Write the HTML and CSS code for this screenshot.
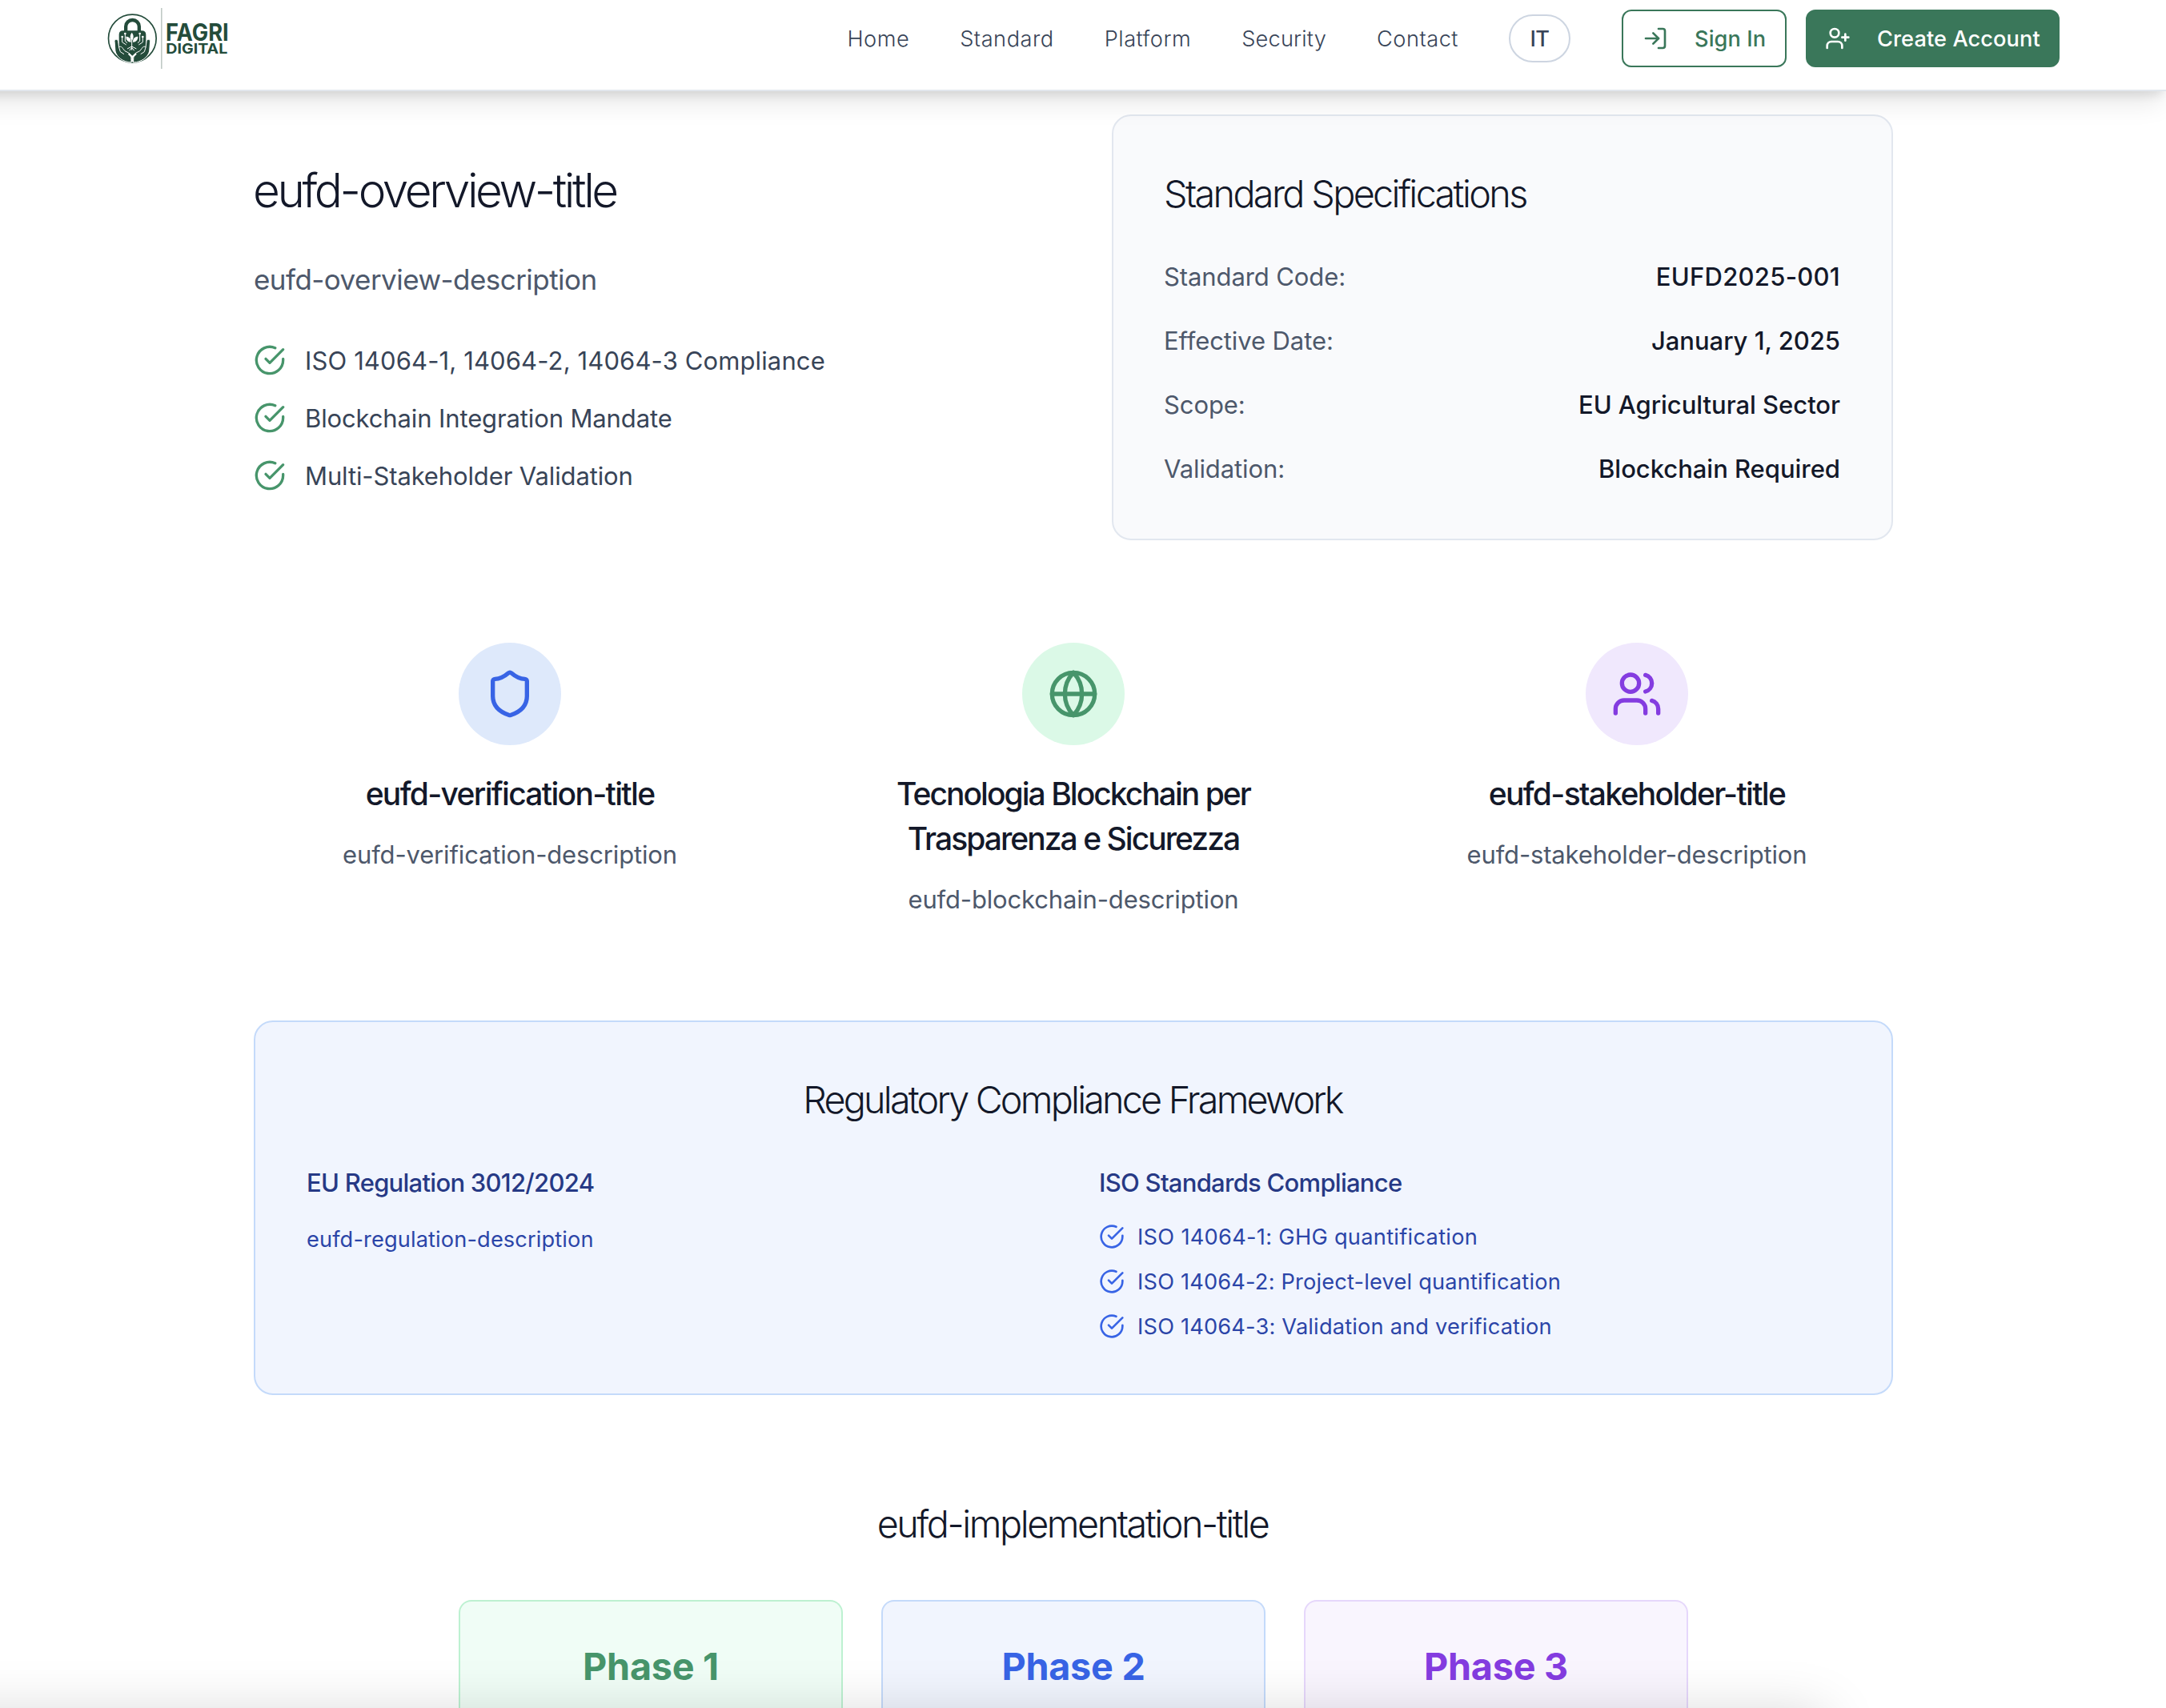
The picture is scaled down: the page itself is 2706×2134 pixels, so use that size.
FILE: index.html
```html
<!DOCTYPE html>
<html lang="en">
<head>
<meta charset="utf-8">
<title>Fagri Digital</title>
<link rel="stylesheet" href="styles.css">
</head>
<body>
<svg class="sprite" aria-hidden="true">
  <symbol id="check" viewBox="0 0 24 24"><path d="M22 11.08V12a10 10 0 1 1-5.93-9.14"/><path d="m9 11 3 3L22 4"/></symbol>
</svg>

<header class="header">
  <svg class="logo" viewBox="90 15 480 255" role="img" aria-label="Fagri Digital">
    <circle class="logo-ring" cx="196" cy="144" r="89.5"/>
    <path class="logo-shackle" d="M171.500 122V99a25 24 0 0 1 50 0v23"/>
    <path class="logo-fill" d="M161 115h70q16 0 16 15v38q-4 20-24 26l-12 14v14h-30v-14l-12-14q-20-6-23-26v-38q0-15 15-15z"/>
    <g class="logo-hand">
      <path d="M129 154c2-8 12-8 14 1l3 23c4-6 11-3 14 3l8 10 14 7c9 6 10 12 10 36-32-2-54-19-60-42z"/>
      <path class="logo-line" d="M146 178l5 16 14 9"/>
    </g>
    <g class="logo-hand" transform="matrix(-1 0 0 1 392 0)">
      <path d="M129 154c2-8 12-8 14 1l3 23c4-6 11-3 14 3l8 10 14 7c9 6 10 12 10 36-32-2-54-19-60-42z"/>
      <path class="logo-line" d="M146 178l5 16 14 9"/>
    </g>
    <g class="logo-leaf">
      <path d="M194 122c8 10 8 20 0 31c-8-11-8-21 0-31z"/>
      <path d="M172 137c12 0 19 6 19 21c-12-1-19-8-19-21z"/>
      <path d="M217 137c-12 0-19 6-19 21c12-1 19-8 19-21z"/>
      <circle cx="158" cy="138" r="4"/><circle cx="169" cy="126" r="4"/><circle cx="235" cy="138" r="4"/><circle cx="224" cy="126" r="4"/>
    </g>
    <path class="logo-line" d="M194 150v38M194 174l-17 9M194 174l17 9M194 178l-9 12M194 178l9 12M158 140v18l15 10M169 128v26l8 7M235 140v18l-15 10M224 128v26l-8 7"/>
    <path class="logo-stem" d="M196 232v-22M196 214l-14-13M196 214l14-13"/>
    <path class="logo-divider" d="M305.500 30V258"/>
    <text class="logo-name" x="321" y="152" textLength="236" lengthAdjust="spacingAndGlyphs">FAGRI</text>
    <text class="logo-sub" x="322" y="200" textLength="231" lengthAdjust="spacingAndGlyphs">DIGITAL</text>
  </svg>

  <nav class="nav">
    <a class="nav-link">Home</a>
    <a class="nav-link">Standard</a>
    <a class="nav-link">Platform</a>
    <a class="nav-link nav-link-tight">Security</a>
    <a class="nav-link">Contact</a>
    <button class="lang">IT</button>
    <div class="actions">
      <a class="btn btn-outline">
        <svg class="icon" viewBox="0 0 24 24"><path d="M15 3h4a2 2 0 0 1 2 2v14a2 2 0 0 1-2 2h-4"/><path d="m10 17 5-5-5-5"/><path d="M15 12H3"/></svg>
        <span>Sign In</span>
      </a>
      <a class="btn btn-solid">
        <svg class="icon" viewBox="0 0 24 24"><path d="M16 21v-2a4 4 0 0 0-4-4H6a4 4 0 0 0-4 4v2"/><circle cx="9" cy="7" r="4"/><path d="M19 8v6M22 11h-6"/></svg>
        <span>Create Account</span>
      </a>
    </div>
  </nav>
</header>

<main class="main">
  <section class="overview">
    <div>
      <h2 class="overview-title">eufd-overview-title</h2>
      <p class="overview-text">eufd-overview-description</p>
      <ul class="checks">
        <li class="check-first"><svg class="icon"><use href="#check"/></svg><span>ISO 14064-1, 14064-2, 14064-3 Compliance</span></li>
        <li><svg class="icon"><use href="#check"/></svg><span>Blockchain Integration Mandate</span></li>
        <li><svg class="icon"><use href="#check"/></svg><span>Multi-Stakeholder Validation</span></li>
      </ul>
    </div>
    <div class="specs">
      <h3 class="heading">Standard Specifications</h3>
      <dl class="spec-list">
        <div class="spec"><dt>Standard Code:</dt><dd class="spec-code">EUFD2025-001</dd></div>
        <div class="spec"><dt>Effective Date:</dt><dd>January 1, 2025</dd></div>
        <div class="spec"><dt>Scope:</dt><dd>EU Agricultural Sector</dd></div>
        <div class="spec"><dt>Validation:</dt><dd>Blockchain Required</dd></div>
      </dl>
    </div>
  </section>

  <section class="features">
    <article class="feature">
      <div class="badge badge-blue"><svg class="icon" viewBox="0 0 24 24"><path d="M20 13c0 5-3.500 7.500-7.660 8.950a1 1 0 0 1-.67-.01C7.500 20.500 4 18 4 13V6a1 1 0 0 1 1-1c2 0 4.500-1.200 6.240-2.720a1.170 1.170 0 0 1 1.520 0C14.510 3.810 17 5 19 5a1 1 0 0 1 1 1z"/></svg></div>
      <h4 class="feature-title feature-title-wide">eufd-verification-title</h4>
      <p class="feature-text">eufd-verification-description</p>
    </article>
    <article class="feature">
      <div class="badge badge-green"><svg class="icon" viewBox="0 0 24 24"><circle cx="12" cy="12" r="10"/><path d="M12 2a14.500 14.500 0 0 0 0 20 14.500 14.500 0 0 0 0-20"/><path d="M2 12h20"/></svg></div>
      <h4 class="feature-title">Tecnologia Blockchain per Trasparenza e Sicurezza</h4>
      <p class="feature-text">eufd-blockchain-description</p>
    </article>
    <article class="feature">
      <div class="badge badge-purple"><svg class="icon" viewBox="0 0 24 24"><path d="M16 21v-2a4 4 0 0 0-4-4H6a4 4 0 0 0-4 4v2"/><circle cx="9" cy="7" r="4"/><path d="M22 21v-2a4 4 0 0 0-3-3.870"/><path d="M16 3.130a4 4 0 0 1 0 7.750"/></svg></div>
      <h4 class="feature-title feature-title-wide">eufd-stakeholder-title</h4>
      <p class="feature-text">eufd-stakeholder-description</p>
    </article>
  </section>

  <section class="compliance">
    <h3 class="heading">Regulatory Compliance Framework</h3>
    <div class="compliance-grid">
      <div>
        <h4 class="compliance-title">EU Regulation 3012/2024</h4>
        <p class="compliance-text">eufd-regulation-description</p>
      </div>
      <div>
        <h4 class="compliance-title">ISO Standards Compliance</h4>
        <ul class="iso-list">
          <li class="iso-first"><svg class="icon"><use href="#check"/></svg><span>ISO 14064-1: GHG quantification</span></li>
          <li><svg class="icon"><use href="#check"/></svg><span>ISO 14064-2: Project-level quantification</span></li>
          <li><svg class="icon"><use href="#check"/></svg><span>ISO 14064-3: Validation and verification</span></li>
        </ul>
      </div>
    </div>
  </section>

  <section class="implementation">
    <h3 class="heading">eufd-implementation-title</h3>
    <div class="phases">
      <div class="phase phase-green">Phase 1</div>
      <div class="phase phase-blue">Phase 2</div>
      <div class="phase phase-purple">Phase 3</div>
    </div>
  </section>
</main>
<div class="bottom-sheet"></div>
</body>
</html>
```

FILE: styles.css
```css
* { box-sizing: border-box; margin: 0; padding: 0; }

body {
  height: 2134px;
  overflow: hidden;
  background: #fff;
  color: #131829;
  font-family: Inter, "Liberation Sans", sans-serif;
}

ul { list-style: none; }
h2, h3, h4 { font-weight: 300; }

.sprite { position: absolute; width: 0; height: 0; }

.icon {
  flex: none;
  width: 32px;
  height: 32px;
  fill: none;
  stroke: currentColor;
  stroke-width: 2;
  stroke-linecap: round;
  stroke-linejoin: round;
}

/* Header */
.header {
  position: relative;
  z-index: 1;
  display: flex;
  justify-content: space-between;
  align-items: flex-start;
  height: 114px;
  margin-left: -60px;
  padding: 5px 133px 0 190px;
  background: #fff;
  border-bottom: 2px solid #e2e7ed;
  box-shadow: 0 20px 30px -6px rgba(0, 0, 0, .1), 0 8px 12px -4px rgba(0, 0, 0, .1);
}

.logo { width: 160px; height: 85px; }
.logo-ring { fill: none; stroke: #244c3b; stroke-width: 5; }
.logo-shackle { fill: none; stroke: #244c3b; stroke-width: 13; }
.logo-fill { fill: #244c3b; }
.logo-hand { fill: #244c3b; stroke: #fff; stroke-width: 3; }
.logo-leaf { fill: #fff; }
.logo-line { fill: none; stroke: #fff; stroke-width: 3; }
.logo-stem { fill: none; stroke: #fff; stroke-width: 7; }
.logo-divider { stroke: #b4c0ba; stroke-width: 4; }
.logo-name { fill: #244c3b; font-size: 88px; font-weight: 750; }
.logo-sub { fill: #244c3b; font-size: 54px; font-weight: 650; }

.nav {
  display: flex;
  align-items: center;
  gap: 64px;
  height: 86px;
  font-size: 27.2px;
  line-height: 38px;
}
.nav-link {
  margin-right: -1px;
  padding-top: 2px;
  color: #384457;
  font-weight: 300;
  letter-spacing: .019em;
}
.nav-link-tight { letter-spacing: .006em; }

.lang {
  width: 77px;
  height: 60px;
  padding-top: 2px;
  background: none;
  border: 2px solid #cdd5e1;
  border-radius: 30px;
  color: #384457;
  font: 500 27.2px/38px Inter, sans-serif;
  letter-spacing: -.02em;
}

.actions { display: flex; gap: 24px; }
.btn {
  display: flex;
  align-items: center;
  gap: 33px;
  height: 72px;
  padding: 0 22px;
  border: 2px solid #3a775a;
  border-radius: 12px;
  font-weight: 500;
  letter-spacing: .003em;
  white-space: nowrap;
}
.btn span { padding-top: 2px; }
.btn-outline { width: 206px; padding-left: 24px; color: #3a775a; }
.btn-solid { width: 317px; background: #3a775a; color: #fff; }

/* Content */
.main { width: 2048px; margin: 29px 0 0 317px; }

.heading {
  padding-top: 2px;
  font-size: 46.7px;
  line-height: 62px;
  letter-spacing: -.056em;
}

.overview {
  display: grid;
  grid-template-columns: 1fr 976px;
  align-items: center;
}
.overview-title {
  margin-left: -1px;
  padding-top: 3px;
  font-size: 58.5px;
  line-height: 69px;
  letter-spacing: -.0585em;
}
.overview-text {
  margin: 48px 0;
  color: #4d586b;
  font-size: 35px;
  line-height: 58.5px;
  letter-spacing: -.0155em;
}
.checks { display: grid; gap: 24px; }
.checks li {
  display: flex;
  align-items: center;
  gap: 24px;
  color: #384457;
  font-size: 31px;
  line-height: 46px;
  letter-spacing: -.004em;
}
.checks span { padding-top: 2px; }
.checks .check-first { letter-spacing: .004em; }
.checks .icon { width: 40px; height: 40px; color: #47956b; }

.specs {
  padding: 64px 64px 64px 63px;
  background: #f9fafc;
  border: 2px solid #e2e7ef;
  border-radius: 24px;
}
.spec-list { display: grid; gap: 32px; margin-top: 48px; }
.spec {
  display: flex;
  justify-content: space-between;
  padding-top: 2px;
  font-size: 31px;
  line-height: 46px;
}
.spec dt { color: #4d586b; letter-spacing: -.003em; }
.spec dd { font-weight: 500; letter-spacing: -.001em; }
.spec .spec-code { letter-spacing: .009em; }

.features {
  display: grid;
  grid-template-columns: repeat(3, 1fr);
  gap: 64px;
  margin-top: 128px;
}
.feature { padding: 0 64px; text-align: center; }
.badge {
  display: flex;
  align-items: center;
  justify-content: center;
  width: 128px;
  height: 128px;
  margin: 0 auto 33px;
  border-radius: 50%;
}
.badge .icon { width: 64px; height: 64px; }
.badge-blue { background: #dee9fb; color: #3864e5; }
.badge-green { background: #dbf9e7; color: #47956b; }
.badge-purple { background: #f0e8fd; color: #843ce0; }
.feature-title { font-size: 39px; font-weight: 500; line-height: 56px; letter-spacing: -.0505em; }
.feature-title-wide { letter-spacing: -.043em; }
.feature-text {
  margin: 24px 0 -1px;
  color: #4d586b;
  font-size: 31px;
  line-height: 48px;
  letter-spacing: -.005em;
}

.compliance {
  margin-top: 128px;
  padding: 64px;
  background: #f1f5fe;
  border: 2px solid #c4dafa;
  border-radius: 24px;
}
.compliance .heading { text-align: center; letter-spacing: -.0597em; text-indent: -2px; }
.compliance-grid {
  display: grid;
  grid-template-columns: 1fr 1fr;
  gap: 64px;
  margin-top: 48px;
}
.compliance-title {
  padding-top: 2px;
  color: #263985;
  font-size: 31px;
  font-weight: 500;
  line-height: 46px;
  letter-spacing: -.0235em;
}
.compliance-text {
  margin-top: 25px;
  color: #2b45a8;
  font-size: 27.2px;
  line-height: 45.5px;
  letter-spacing: .005em;
}
.iso-list { display: grid; gap: 16px; margin-top: 24px; }
.iso-list li {
  display: flex;
  align-items: center;
  gap: 16px;
  color: #2b45a8;
  font-size: 27.2px;
  line-height: 38px;
  letter-spacing: .007em;
}
.iso-list span { padding-top: 2px; }
.iso-list .iso-first { letter-spacing: .011em; }
.iso-list .icon { color: #3864e5; }

.implementation { margin-top: 128px; }
.implementation .heading { text-align: center; letter-spacing: -.052em; text-indent: -2px; }
.phases {
  display: grid;
  grid-template-columns: repeat(3, 480px);
  justify-content: center;
  gap: 48px;
  margin-top: 64px;
}
.phase {
  height: 135px;
  padding-top: 50px;
  border: 2px solid;
  border-bottom: 0;
  border-radius: 16px 16px 0 0;
  font-size: 46.7px;
  font-weight: 700;
  line-height: 62px;
  letter-spacing: -.005em;
  text-align: center;
}
.phase-green { background: #f0fdf6; border-color: #bdf1d1; color: #47956b; }
.phase-blue { background: #f1f5fe; border-color: #c4dafa; color: #3864e5; }
.phase-purple { background: #f9f5fe; border-color: #e6d7fb; color: #843ce0; }

/* Sheet docked below the fold; only its shadow reaches into view */
.bottom-sheet {
  position: fixed;
  top: 2142px;
  left: -200px;
  width: 2480px;
  height: 200px;
  box-shadow: 0 0 64px rgba(0, 0, 0, .17);
}
```
